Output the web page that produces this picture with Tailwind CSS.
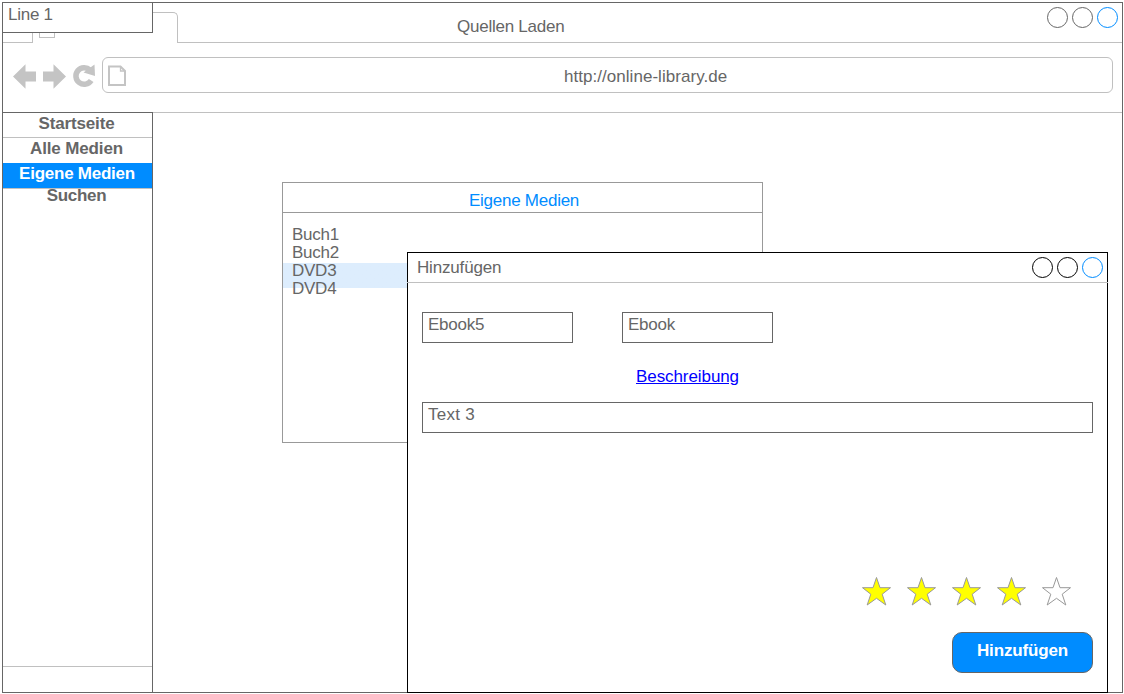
<!DOCTYPE html>
<html lang="de">
<head>
<meta charset="utf-8">
<title>Online Library</title>
<script src="https://cdn.jsdelivr.net/npm/@tailwindcss/browser@4"></script>
</head>
<body class="bg-white">
<div class="relative h-[694px] w-[1124px] overflow-hidden pt-[2px] pl-[2px] font-['Liberation_Sans',Arial,sans-serif] text-[17px] leading-[18px] tracking-[-0.25px] text-[#666]">
  <!-- Browser window -->
  <div class="flex h-[691px] w-[1121px] flex-col border border-[#666]">
    <header class="flex h-[40px] w-full">
      <div class="w-[30px] border-r border-b border-[#c0c0c0]"></div>
      <div class="flex h-[35px] w-[120px] items-end pl-[6px]"><div class="size-[16px] border border-[#c0c0c0]"></div></div>
      <div class="mt-[9px] w-[25px] rounded-tr-[5px] border-t border-r border-[#c0c0c0]"></div>
      <div class="flex flex-1 justify-between border-b border-[#c0c0c0] pr-[4px]">
        <h1 class="mt-[15px] ml-[279px]">Quellen Laden</h1>
        <div class="mt-[4px] flex gap-[4px]">
          <span class="size-[21px] rounded-full border border-[#666]"></span>
          <span class="size-[21px] rounded-full border border-[#666]"></span>
          <span class="size-[21px] rounded-full border border-[#008cff]"></span>
        </div>
      </div>
    </header>
    <div class="flex h-[70px] border-b border-[#c0c0c0] pt-[14px]">
      <svg class="h-[36px] w-[99px]" viewBox="3 57 99 36" fill="#c4c4c4">
        <path d="M13 76.500 25.500 64.300V71.500H36V81.500H25.500V88.700Z"/>
        <path d="M66 76.500 53.500 64.300V71.500H43V81.500H53.500V88.700Z"/>
        <path d="M91.200 80.500A8.300 8.300 0 1 1 90 70" fill="none" stroke="#c4c4c4" stroke-width="5.500"/>
        <path d="M94.500 64.500 95 76 83.500 72.500Z"/>
      </svg>
      <div class="flex h-[36px] w-[1011px] rounded-[6px] border border-[#c0c0c0]">
        <svg class="mt-[7px] ml-[5px] h-[21px] w-[18px]" viewBox="0 0 18 21" fill="none" stroke="#c4c4c4" stroke-width="2"><path d="M1 1.500H12.500L17 6V20H1Z"/><path d="M12.500 1.500V6H17" stroke-width="1.300"/></svg>
        <span class="mt-[10px] ml-[438px] tracking-[0.04px]">http://online-library.de</span>
      </div>
    </div>
    <div class="flex flex-1">
      <nav class="-mt-px flex w-[150px] flex-col border-t border-r border-[#666] text-center font-bold tracking-[-0.14px]">
        <a class="h-[25px] border-b border-[#c0c0c0] pt-[2px] pr-[2px]">Startseite</a>
        <a class="h-[25px] pt-[2px] pr-[2px]">Alle Medien</a>
        <a class="h-[26px] border-b border-[#c0c0c0] bg-[#008cff] pt-[2px] pr-[1px] tracking-[-0.24px] text-white">Eigene Medien</a>
        <a class="-mt-[2px] pr-[2px] tracking-[-0.3px]">Suchen</a>
        <div class="mt-auto h-[26px] border-t border-[#c0c0c0]"></div>
      </nav>
      <main class="pt-[69px] pl-[129px]">
        <section class="h-[261px] w-[481px] border border-[#999]">
          <h2 class="h-[30px] border-b border-[#999] pt-[9px] pl-[3px] text-center text-[#008cff]">Eigene Medien</h2>
          <ul class="bg-linear-to-b from-[#ddedfd] to-[#ddedfd] bg-[length:100%_25px] bg-[position:0_50px] bg-no-repeat pt-[13px] pl-[9px]">
            <li>Buch1</li><li>Buch2</li><li>DVD3</li><li>DVD4</li>
          </ul>
        </section>
      </main>
    </div>
  </div>

  <!-- Floating note field -->
  <div class="absolute top-[2px] left-[2px] h-[31px] w-[151px] border border-[#666] bg-white pt-[3px] pl-[5px]">Line 1</div>

  <!-- Dialog window -->
  <div class="absolute top-[252px] left-[407px] flex h-[441px] w-[701px] flex-col border border-black bg-white">
    <div class="-ml-px flex h-[30px] w-[701px] justify-between border-b border-[#c0c0c0] pr-[5px] pl-[10px]">
      <h2 class="mt-[6px] tracking-[-0.17px]">Hinzufügen</h2>
      <div class="mt-[4px] flex gap-[4px]">
        <span class="size-[21px] rounded-full border border-black"></span>
        <span class="size-[21px] rounded-full border border-black"></span>
        <span class="size-[21px] rounded-full border border-[#008cff]"></span>
      </div>
    </div>
    <div class="flex flex-1 flex-col px-[14px] pt-[29px]">
      <div class="flex gap-[49px]">
        <div class="h-[31px] w-[151px] border border-[#666] pt-[3px] pl-[5px]">Ebook5</div>
        <div class="h-[31px] w-[151px] border border-[#666] pt-[3px] pl-[5px]">Ebook</div>
      </div>
      <a class="mt-[25px] ml-[214px] self-start tracking-[-0.08px] text-[#00f] underline">Beschreibung</a>
      <div class="mt-[16px] h-[31px] w-[671px] border border-[#666] pt-[3px] pl-[5px] tracking-[0.25px]">Text 3</div>
      <svg class="mt-[142px] ml-[438px] h-[32px] w-[215px]" viewBox="0 0 215 32" stroke="#999" stroke-width="1" fill="#ff0">
        <defs><path id="star" d="M16.500 2.500 20 12.700H30.500L22.200 19.200 25.800 30 16.500 23.300 7.200 30 10.800 19.200 2.500 12.700H13Z"/></defs>
        <use href="#star"/><use href="#star" x="45"/><use href="#star" x="90"/><use href="#star" x="135"/><use href="#star" x="180" fill="#fff"/>
      </svg>
      <button class="mt-[25px] h-[41px] w-[141px] self-end rounded-[10px] border border-[#666] bg-[#008cff] pb-[3px] font-bold tracking-[-0.14px] text-white">Hinzufügen</button>
    </div>
  </div>
</div>
</body>
</html>
